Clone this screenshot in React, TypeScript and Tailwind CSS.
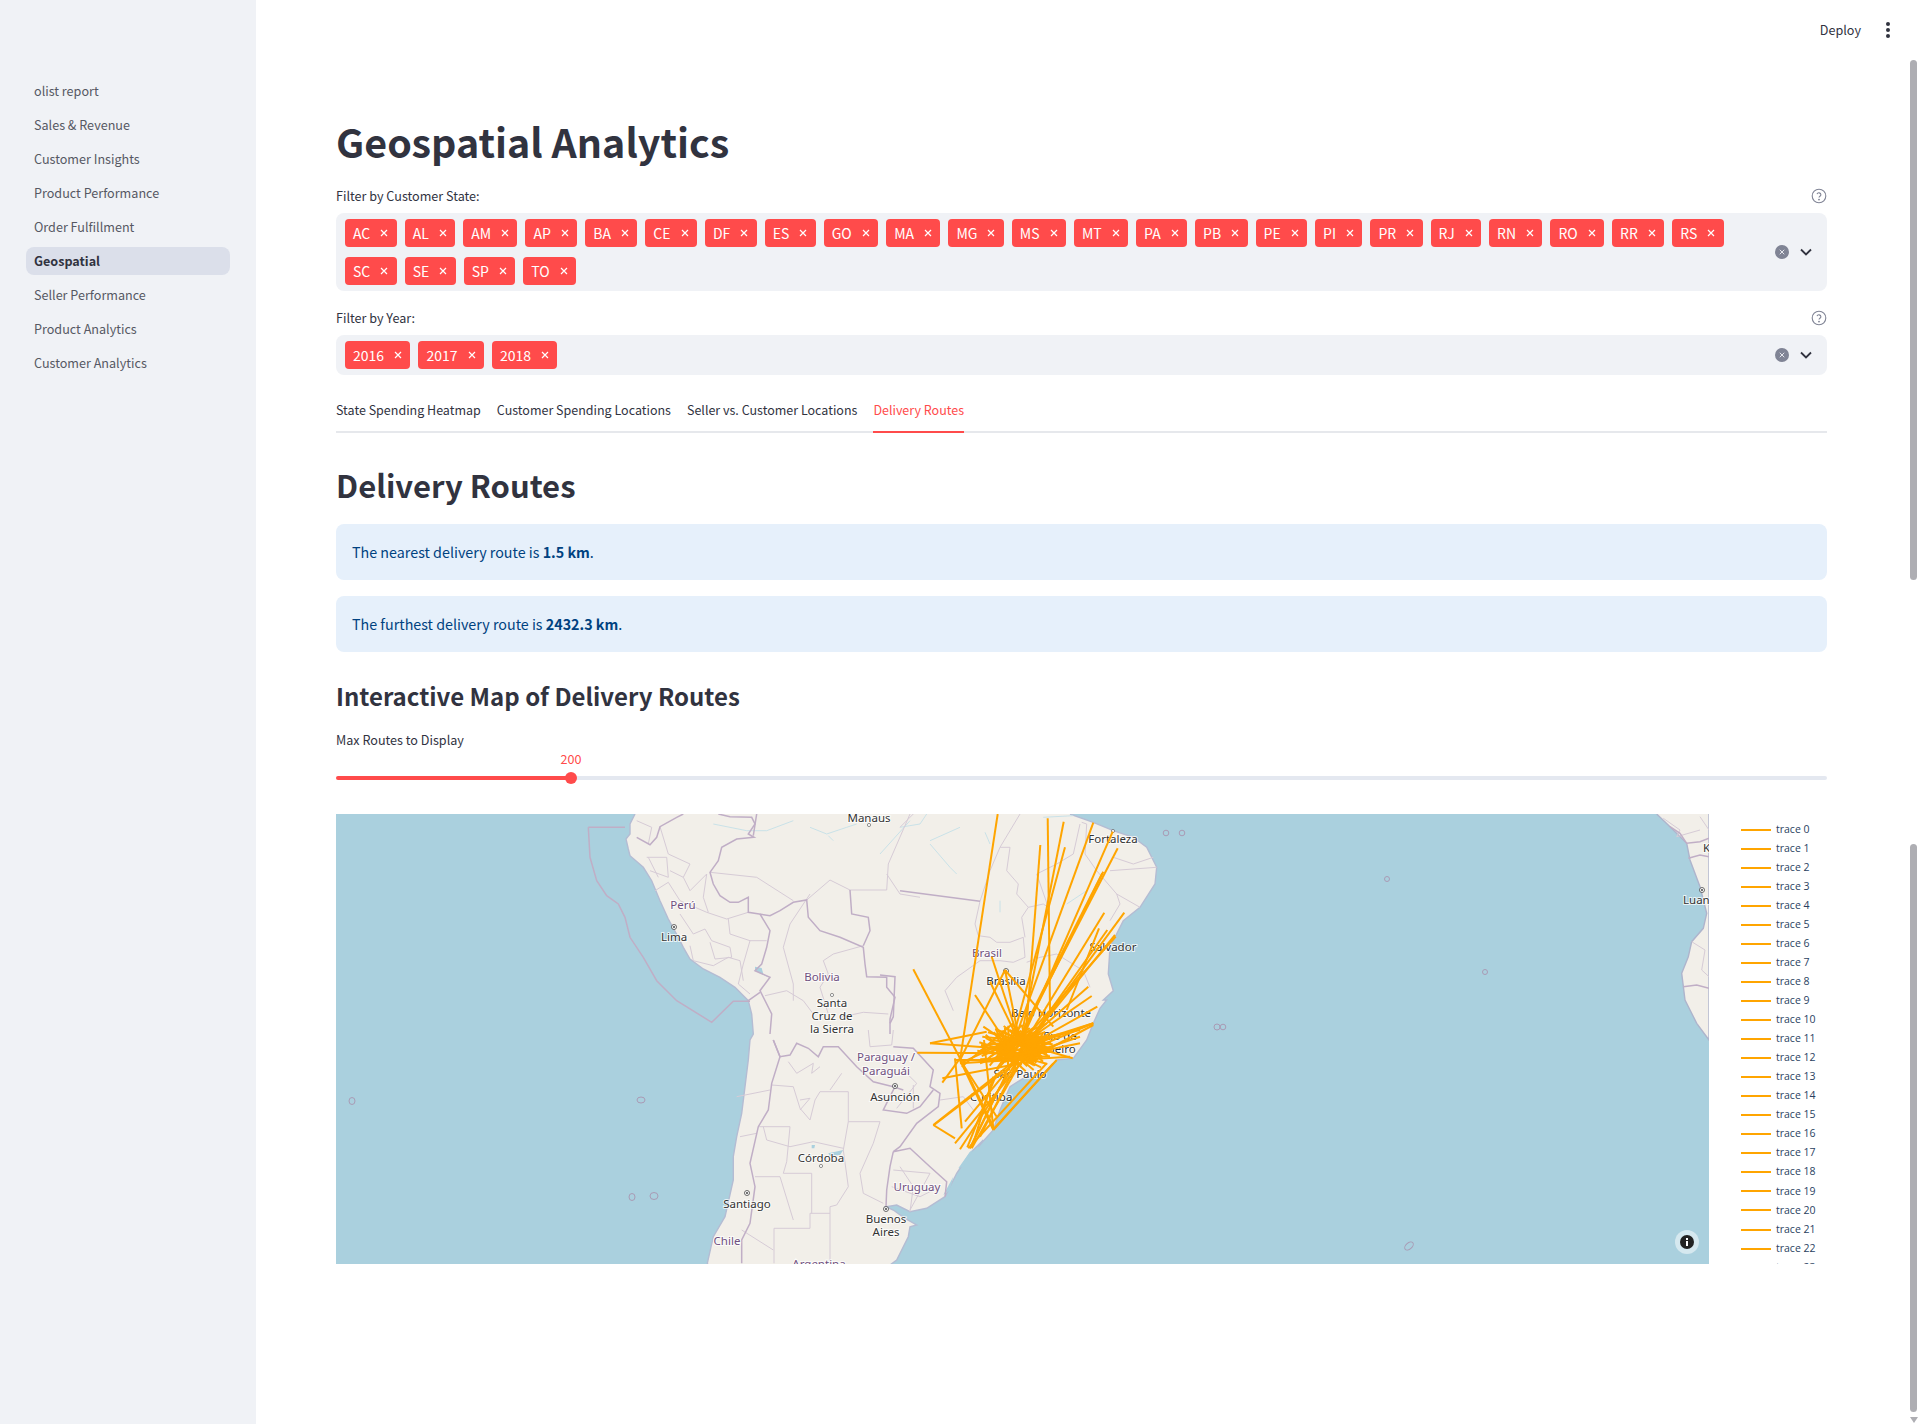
import React from "react";

const SANS = "font-['Noto_Sans_CJK_SC','Noto_Sans',sans-serif]";
const NAV = ["olist report","Sales & Revenue","Customer Insights","Product Performance","Order Fulfillment","Geospatial","Seller Performance","Product Analytics","Customer Analytics"];
const STATES = ["AC","AL","AM","AP","BA","CE","DF","ES","GO","MA","MG","MS","MT","PA","PB","PE","PI","PR","RJ","RN","RO","RR","RS","SC","SE","SP","TO"];
const YEARS = ["2016","2017","2018"];
const TABS = ["State Spending Heatmap","Customer Spending Locations","Seller vs. Customer Locations","Delivery Routes"];

// Each zoomed crop of the map has its own origin; points are written in crop units.
const conv = (ox: number, oy: number, a: number[]) => {
  const out: string[] = [];
  for (let i = 0; i < a.length; i += 2) out.push(`${(ox + a[i] / 3).toFixed(1)},${(oy + a[i + 1] / 3).toFixed(1)}`);
  return out.join(" ");
};
const z9 = (a: number[]) => conv(580, 814, a);
const z10 = (a: number[]) => conv(700, 1030, a);
const z7 = (a: number[]) => conv(900, 814, a);
const z8 = (a: number[]) => conv(910, 1000, a);
const z5 = (a: number[]) => conv(880, 810, a);
const z11 = (a: number[]) => conv(1620, 810, a);

const LAND = [
  z9([165,0,150,30,150,60,138,75,145,105,150,125,190,160,215,200,240,260,265,315,295,370,310,400,330,435,370,465,420,490,465,520,505,560,515,600,520,660]),
  z10([150,30,145,90,135,170,125,250,110,320,100,380,100,450,75,560,40,620,22,700,25,705,570,705,590,690,625,620,630,590,650,585,615,565,580,540,558,530,590,525,630,545,680,535,735,500,770,430,810,370,850,330]),
  z8([205,440,250,390,270,330,300,260,340,235,400,220,440,180,490,175,530,120,550,70,570,25,590,0]),
  z7([610,558,640,530,625,480,630,400,670,320,720,280,765,210,770,160,740,100,700,70,640,50,580,25,510,0]),
].join(" ");

const AFRICA = z11([110,12,150,50,200,100,210,150,240,230,260,310,250,355,215,395,205,440,185,490,195,570,230,640,267,690,267,12]);

const STRONG = [
  z9([25,40,135,40]),
  z9([25,40,30,130,50,200,80,245,115,270,135,310,150,370,190,430,230,500,290,560,395,625,460,562,510,562]),
  z9([170,70,210,92,230,70,240,38,290,10,310,0]),
  z9([415,0,450,8,515,10,525,30,505,60,522,70,470,75,425,100,415,140,390,175,400,210,420,245,450,265,475,265,505,250,505,295,570,305,600,290,640,265,680,258,685,310,720,350,780,370,850,400,855,450,860,488,920,490,920,520,945,550,930,615,930,660]),
  z9([540,300,570,350,560,400,545,450,525,470,570,490,540,530,575,600,570,660]),
  z9([505,560,540,535]),
  z9([810,228,815,300,865,310,870,350,850,395]),
  z9([530,0,520,65]),
  z10([220,30,240,80,270,75,290,40,325,55,355,80,370,50,415,50,470,110,520,155,580,170,610,180]),
  z10([580,50,640,55,700,120,690,170,720,190,715,230,650,280,600,350,580,365,630,355,690,410,740,455,735,500]),
  z10([580,365,570,410,560,480,558,530]),
  z10([585,170,550,240,620,250,660,230,700,180]),
  z10([220,30,240,80,215,160,205,240,175,290,150,400,165,470,150,580,125,630,125,700]),
  z7([0,230,240,262]),
  z5([0,495,45,500,40,620,30,640]),
  z11([150,50,180,70,200,100,240,95,267,85]),
  z11([205,145,240,135,267,140]),
  z11([190,530,230,525,267,535]),
];
const THIN = [
  z9([390,175,530,190,640,260]), z9([680,258,750,198,810,228,920,228,925,150,990,0]), z9([920,180,960,240,1020,250]),
  z9([240,38,265,120,330,150,310,190,330,230,380,180]), z9([225,230,265,205,300,260,380,295,440,315,505,295]),
  z9([300,300,340,360,375,345,395,380,450,400,455,430,405,435,390,385]), z9([330,395,340,440,400,455,445,430,480,440,490,500]),
  z9([445,315,450,360,510,380,560,380]), z9([510,380,490,450,475,510,510,540]), z9([205,130,235,190]), z9([690,240,630,330,610,400,640,510,640,560]),
  z9([850,395,760,420,730,440,745,480,720,520,745,600]), z9([555,545,620,530,670,560,700,600]),z9([780,610,850,595,925,600]),
  z9([170,20,215,40,205,90]), z9([200,130,260,130,265,190,210,170]), z9([380,180,370,250,385,295]), z9([310,190,270,170]),
  z10([215,165,280,170,300,235,330,270,345,210,360,185,445,185,445,275,540,275,520,340,480,430,490,490,550,520]),
  z10([445,275,430,360,445,470,410,525,390,530,390,700]), z10([222,700,222,595,330,595,330,550,390,550]), z10([340,335,430,355]),
  z10([250,430,335,430,335,550]), z10([175,290,270,290,260,395,250,430]), z10([425,130,390,180]), z10([165,440,240,440,280,570]),
  z10([580,420,690,430,630,540]), z10([575,470,660,500,720,470]), z10([610,120,650,160,590,235]), z10([120,320,170,310]), z10([110,200,210,180]),
  z10([190,290,200,330,270,350,340,335]), z10([125,600,220,660]), z10([720,210,790,200,820,240]), z10([265,95,290,130,340,100,335,130,360,110]),
  z10([300,210,330,205,300,240]), z10([580,0,575,45,510,50,505,0]), z10([640,165,640,235]), z10([600,410,640,470,630,545]),
  z7([240,262,225,330,235,365,270,370,290,385,330,385,370,370,375,430,340,445,300,440,240,440,170,490,135,530,160,590]),
  z7([385,280,365,310,375,370]), z7([300,100,330,100,320,170,355,210,350,240,385,280,430,270,445,280,410,180,470,150]),
  z7([240,262,270,170,300,100,360,0]), z7([560,30,555,120,590,170,650,240,720,280]), z7([630,170,770,160]), z7([650,240,660,270,630,320]),
  z7([380,445,420,430,470,420,550,470,570,520]), z7([640,130,700,150,760,130]), z7([0,40,40,0]), z7([470,150,520,120,540,30]), z7([545,25,560,30]),
  z11([130,25,180,60,170,80,240,60]), z11([215,395,255,420,245,480,267,500]),z11([240,20,267,60]),
];
const RIVERS = [
  z9([690,40,740,60,800,40,830,30]), z9([745,65,760,80]), z9([400,30,500,50,560,50,640,20]), z9([900,120,990,20]), z7([90,80,180,40]), z7([90,90,150,160,170,180]),
  z7([0,40,60,30,80,0]), z7([500,270,560,230]), z7([300,260,300,295]), z7([255,55,270,90]), z7([430,10,520,5]),
];
const WATER = [
  z9([525,458,545,462,550,480,565,490,545,480,525,470]), z10([385,370,430,360,420,375,390,378]), z10([335,345,345,345,343,355,335,355]),
  z10([810,365,820,360,790,410,775,415]), z10([730,495,760,440,750,480]),
];

// Delivery routes: start and end points read from the crop.
const ROUTES: number[][] = [
  [353,12,240,750],[100,478,240,745],[240,745,340,950],[503,25,510,600],[551,35,430,650],[555,112,400,680],[481,105,440,640],[640,38,400,700],
  [698,65,430,680],[713,115,410,700],[670,185,400,730],[667,190,396,725],[673,308,420,720],[733,308,430,720],[657,355,560,600],[682,360,420,730],
  [705,375,400,750],[707,380,350,780],[625,530,420,710],[635,558,400,720],[652,590,420,720],[640,640,400,740],[640,640,300,760],[600,700,400,740],
  [578,745,420,700],[570,740,240,760],[335,440,420,700],[375,480,420,700],[375,480,240,750],[375,480,520,650],[330,515,430,720],[285,555,400,730],
  [310,650,430,730],[150,700,420,720],[150,700,320,665],[112,728,420,730],[187,818,240,745],[187,805,420,760],[312,690,340,955],[225,745,245,955],
  [160,945,420,740],[162,945,425,745],[160,945,225,985],[225,1000,430,750],[240,1018,420,740],[265,1015,500,760],[275,1015,420,760],[340,960,520,760],
  [340,958,530,750],[340,960,240,750],[255,935,400,760],[350,920,240,750],[270,1015,380,790],[262,1012,350,790],[280,1000,340,800],[225,750,420,750],
  [240,760,500,640],[245,770,400,640],[640,640,450,700],[640,645,500,720],[600,680,420,740],[600,660,400,700],[270,1015,360,830],[300,980,420,740],
];
for (let i = 0; i < 80; i++) {
  const a = i * 2.399;
  const r1 = 45 + (i * 37) % 80;
  const r2 = 40 + (i * 53) % 85;
  const x = 415 + Math.cos(a) * r1, y = 718 + Math.sin(a) * r1 * 0.62;
  const x2 = 415 + Math.cos(a + 2.4) * r2, y2 = 718 + Math.sin(a + 2.4) * r2 * 0.62;
  ROUTES.push([Math.round(x), Math.round(y), Math.round(x2), Math.round(y2)]);
}

type L = { t: string; x: number; y: number; c?: boolean; a?: "start" | "middle" };
const LABELS: L[] = [
  { t: "Manaus", x: 869, y: 818 },{ t: "Perú", x: 683, y: 905, c: true },{ t: "Lima", x: 674, y: 937 },{ t: "Bolivia", x: 822, y: 977, c: true },
  { t: "Santa", x: 832, y: 1003 },{ t: "Cruz de", x: 832, y: 1016 },{ t: "la Sierra", x: 832, y: 1029 },{ t: "Paraguay /", x: 886, y: 1057, c: true },
  { t: "Paraguái", x: 886, y: 1071, c: true },{ t: "Asunción", x: 895, y: 1097 },{ t: "Córdoba", x: 821, y: 1158 },{ t: "Uruguay", x: 917, y: 1187, c: true },
  { t: "Buenos", x: 886, y: 1219 },{ t: "Aires", x: 886, y: 1232 },{ t: "Santiago", x: 747, y: 1204 },{ t: "Chile", x: 727, y: 1241, c: true },
  { t: "Argentina", x: 819, y: 1264, c: true },{ t: "Fortaleza", x: 1113, y: 839 },{ t: "Salvador", x: 1113, y: 947 },{ t: "Brasil", x: 987, y: 953, c: true },
  { t: "Brasília", x: 1006, y: 981 },{ t: "Belo Horizonte", x: 1051, y: 1013 },{ t: "Rio de", x: 1060, y: 1036 },{ t: "Janeiro", x: 1057, y: 1049 },
  { t: "São Paulo", x: 1020, y: 1074 },{ t: "Curitiba", x: 991, y: 1097 },{ t: "Luanda", x: 1683, y: 900, a: "start" },{ t: "Kinshasa", x: 1703, y: 848, a: "start" },
];
const CAPITALS = [[674,927],[895,1086],[886,1209],[747,1193],[1006,971],[1702,890]];
const TOWNS = [[869,825],[832,995],[821,1166],[1113,831]];
const ISLES = [[352,1101,3,3.5],[641,1100,4,3],[632,1197,3,3.5],[654,1196,4,3.5],[1166,833,2.8,2.8],[1182,833,2.8,2.8],[1217,1027,3,3],[1223,1027,2.8,2.8],[1387,879,2.5,2.5],[1485,972,2.5,2.5]];

function MapView() {
  return (
    <svg viewBox="336 814 1373 450" className="block h-[450px] w-[1373px] shrink-0 bg-[#aad0de]">
      <polygon points={LAND} fill="#f2efe9" />
      <polygon points={AFRICA} fill="#f2efe9" />
      <polyline points={LAND} fill="none" stroke="#b4bcd3" strokeWidth="1.4" />
      <polyline points={AFRICA} fill="none" stroke="#aeb4cc" strokeWidth="1.4" />
      {RIVERS.map((p, i) => <polyline key={i} points={p} fill="none" stroke="#c4e0e8" strokeWidth="0.9" />)}
      {WATER.map((p, i) => <polygon key={i} points={p} fill="#aad0de" />)}
      {THIN.map((p, i) => <polyline key={i} points={p} fill="none" stroke="#d6cbd6" strokeWidth="1" />)}
      {STRONG.map((p, i) => <polyline key={i} points={p} fill="none" stroke="#c0aec6" strokeWidth="1.5" />)}
      {ISLES.map((e, i) => <ellipse key={i} cx={e[0]} cy={e[1]} rx={e[2]} ry={e[3]} fill="none" stroke="#a99bb5" strokeWidth="1" />)}
      <ellipse cx="1409" cy="1246" rx="5" ry="3" transform="rotate(-40 1409 1246)" fill="none" stroke="#a99bb5" strokeWidth="1" />
      {CAPITALS.map((c, i) => (
        <g key={i}>
          <circle cx={c[0]} cy={c[1]} r="2.5" fill="#fff" stroke="#444" strokeWidth="0.8" />
          <circle cx={c[0]} cy={c[1]} r="1" fill="#444" />
        </g>
      ))}
      {TOWNS.map((c, i) => <circle key={i} cx={c[0]} cy={c[1]} r="1.6" fill="#fff" stroke="#666" strokeWidth="0.7" />)}
      {LABELS.map((l, i) => (
        <text key={i} x={l.x} y={l.y} dy="0.35em" textAnchor={l.a ?? "middle"} fill={l.c ? "#70507f" : "#333"} stroke="#fff" strokeOpacity="0.75" strokeWidth="2" className="text-[11.5px] [paint-order:stroke] font-['Noto_Sans',sans-serif]">{l.t}</text>
      ))}
      {ROUTES.map((r, i) => <polyline key={i} points={z5(r)} fill="none" stroke="#ffa500" strokeWidth="2" />)}
      <circle cx="1687" cy="1242" r="12" fill="#fff" fillOpacity="0.5" />
      <circle cx="1687" cy="1242" r="7" fill="#222" />
      <rect x="1686" y="1241" width="2" height="5" fill="#fff" />
      <rect x="1686" y="1238" width="2" height="2" fill="#fff" />
    </svg>
  );
}

function X({ className }: { className?: string }) {
  return <svg viewBox="0 0 8 8" className={className}><path d="M1 1 7 7M7 1 1 7" stroke="currentColor" strokeWidth="1.2" fill="none" /></svg>;
}
function Tag({ t }: { t: string }) {
  return (
    <span className="flex h-7 items-center gap-[10px] rounded bg-[#ff4b4b] pl-2 pr-[8.4px] text-[14px] text-white">
      {t}
      <X className="h-2 w-2" />
    </span>
  );
}
function Help() {
  return (
    <svg viewBox="0 0 16 16" className="h-4 w-4 text-[#808495]" fill="none" stroke="currentColor" strokeWidth="1.1">
      <circle cx="8" cy="8" r="6.8" />
      <path d="M6 6.2a2 2 0 0 1 3.9.6c0 1.3-1.9 1.6-1.9 2.8" />
      <circle cx="8" cy="11.6" r="0.4" />
    </svg>
  );
}
function Indicators() {
  return (
    <div className="flex w-[59px] shrink-0 items-center">
      <span className="ml-[7px] flex h-[14px] w-[14px] items-center justify-center rounded-full bg-[#808495] text-[#f0f2f6]"><X className="h-[6px] w-[6px]" /></span>
      <svg viewBox="0 0 12 8" className="ml-[11px] h-2 w-3" fill="none" stroke="#31333f" strokeWidth="1.8"><path d="M1 1.5 6 6.5 11 1.5" /></svg>
    </div>
  );
}
function Label({ t, help, cls }: { t: string; help?: boolean; cls: string }) {
  return (
    <div className={`flex h-5 items-center justify-between text-[12.6px] ${cls}`}>
      <span>{t}</span>
      {help && <Help />}
    </div>
  );
}
function Note({ cls, pre, val }: { cls: string; pre: string; val: string }) {
  return (
    <div className={`flex h-14 items-center rounded-lg bg-[#e6f0fb] px-4 pb-[1px] text-[14.3px] text-[#004280] ${cls}`}>
      <span>{pre} <b className="font-semibold">{val}</b>.</span>
    </div>
  );
}

export default function App() {
  return (
    <div className={`relative flex h-[1424px] w-[1920px] overflow-hidden bg-white text-[#31333f] ${SANS}`}>
      <aside className="flex w-[256px] shrink-0 flex-col gap-[6px] bg-[#f0f2f6] px-[26px] pt-[77px]">
        {NAV.map((n) => (
          <div key={n} className={`flex h-7 items-center rounded-lg px-2 text-[12.6px] ${n === "Geospatial" ? "bg-[#dbdfea] font-semibold text-[#31333f]" : "text-[#565863]"}`}>{n}</div>
        ))}
      </aside>
      <main className="min-w-0 flex-1 pl-20 pr-[93px] pt-[112px]">
        <h1 className="flex h-[58px] items-center text-[39.4px] font-bold">Geospatial Analytics</h1>
        <Label t="Filter by Customer State:" help cls="mt-4" />
        <div className="mt-[7px] flex rounded-lg bg-[#f0f2f6] py-[6px] pl-[9px]">
          <div className="flex min-w-0 flex-1 flex-wrap gap-x-2 gap-y-[10px]">{STATES.map((s) => <Tag key={s} t={s} />)}</div>
          <Indicators />
        </div>
        <Label t="Filter by Year:" help cls="mt-[17px]" />
        <div className="mt-[7px] flex rounded-lg bg-[#f0f2f6] py-[6px] pl-[9px]">
          <div className="flex min-w-0 flex-1 gap-2">{YEARS.map((s) => <Tag key={s} t={s} />)}</div>
          <Indicators />
        </div>
        <div className="mt-[15px] flex h-[43px] gap-4 border-b-2 border-[#e6e8ec]">
          {TABS.map((t, i) => (
            <div key={t} className={`-mb-[2px] flex h-[43px] items-center border-b-2 pb-[1px] text-[12.5px] ${i === 3 ? "border-[#ff4b4b] text-[#ff4b4b]" : "border-transparent"}`}>{t}</div>
          ))}
        </div>
        <h2 className="mt-[34px] flex h-10 items-center pb-[3px] text-[31px] font-semibold">Delivery Routes</h2>
        <Note cls="mt-[17px]" pre="The nearest delivery route is" val="1.5 km" />
        <Note cls="mt-4" pre="The furthest delivery route is" val="2432.3 km" />
        <h3 className="mt-[25px] flex h-10 items-center pb-[2px] text-[24px] font-semibold">Interactive Map of Delivery Routes</h3>
        <Label t="Max Routes to Display" cls="mt-[13px]" />
        <div className="mt-[26px] flex h-1">
          <div className="relative w-[235px] rounded-l-full bg-[#ff4b4b]">
            <span className="absolute -right-[6px] -top-1 h-3 w-3 rounded-full bg-[#ff4b4b]" />
            <span className="absolute -right-[20px] -top-[27px] w-10 text-center text-[12.6px] leading-5 text-[#ff4b4b]">200</span>
          </div>
          <div className="flex-1 rounded-r-full bg-[#e4e8f0]" />
        </div>
        <div className="mt-[34px] flex h-[450px]">
          <MapView />
          <div className="h-[450px] flex-1 overflow-hidden pl-8 pt-[6px] font-['Open_Sans',sans-serif] text-[10.5px] text-[#2a3f5f]">
            {Array.from({ length: 24 }, (_, i) => (
              <div key={i} className="flex h-[19.05px] items-center gap-[5px]">
                <span className="h-[2px] w-[30px] bg-[#ffa500]" />
                <span>trace {i}</span>
              </div>
            ))}
          </div>
        </div>
      </main>
      <div className="absolute right-[30px] top-[20px] flex h-5 items-center text-[12.6px]">
        <span>Deploy</span>
        <span className="ml-[25px] flex flex-col gap-[2px]">
          <i className="h-1 w-1 rounded-full bg-[#31333f]" /><i className="h-1 w-1 rounded-full bg-[#31333f]" /><i className="h-1 w-1 rounded-full bg-[#31333f]" />
        </span>
      </div>
      <span className="absolute right-[3px] top-[60px] h-[520px] w-[7px] rounded-full bg-[#aeaeb3]" />
      <span className="absolute right-[3px] top-[844px] h-[568px] w-[7px] rounded-full bg-[#aeaeb3]" />
      <svg viewBox="0 0 8 6" className="absolute right-[2.5px] top-[1417px] h-[6px] w-2"><path d="M0 0H8L4 6Z" fill="#aeaeb3" /></svg>
    </div>
  );
}
